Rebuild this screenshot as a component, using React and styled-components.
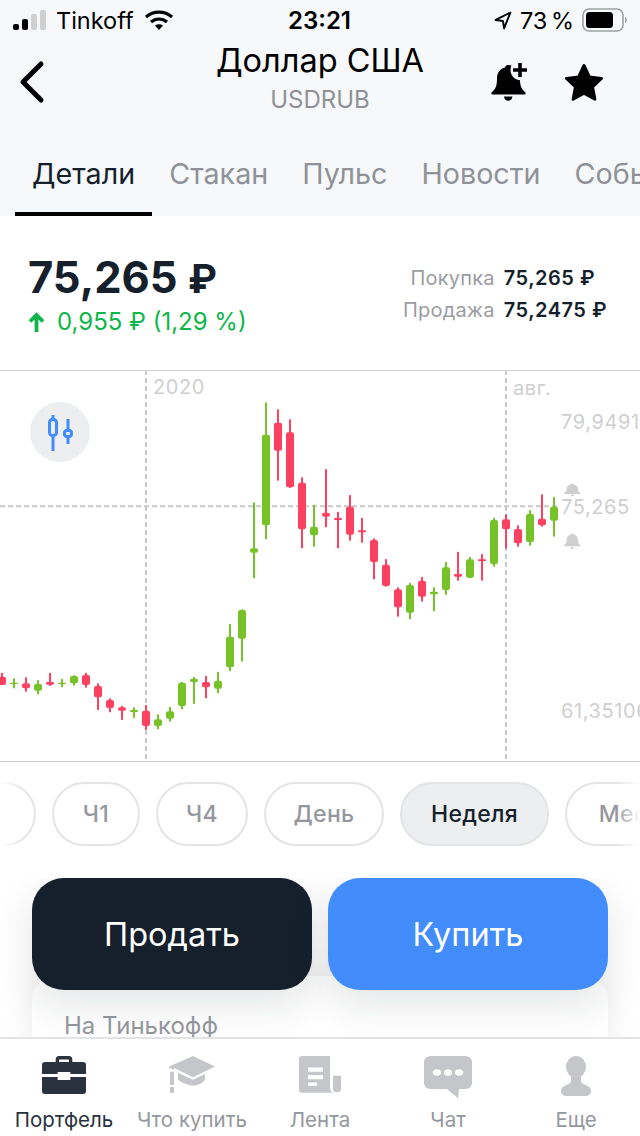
import styled, { createGlobalStyle } from "styled-components";

const GlobalStyle = createGlobalStyle`
  html, body {
    margin: 0;
    padding: 0;
    background: #fff;
    font-family: "Inter", "Noto Sans", sans-serif;
  }
  * { box-sizing: border-box; }
`;

const Page = styled.div`
  width: 640px;
  height: 1136px;
  display: flex;
  flex-direction: column;
  overflow: hidden;
  background: #fff;
`;

const Header = styled.header`
  height: 216px;
  flex: none;
  background: #f7f8fa;
  display: flex;
  flex-direction: column;
`;

const StatusBar = styled.div`
  height: 40px;
  padding: 0 13px 0 12px;
  display: grid;
  grid-template-columns: 1fr auto 1fr;
  align-items: center;
  color: #000;
  font-size: 23.5px;
`;

const StatusSide = styled.div`
  display: flex;
  align-items: center;
  justify-content: ${(p) => (p.$end ? "flex-end" : "flex-start")};
  gap: ${(p) => p.$gap || 10}px;
`;

const Clock = styled.div`
  font-weight: 600;
  font-size: 24px;
`;

const Percent = styled.span`
  word-spacing: -3px;
`;

const TitleRow = styled.div`
  height: 84px;
  padding: 0 36px 0 18px;
  display: grid;
  grid-template-columns: 138px 1fr 120px;
  align-items: center;
`;

const TitleBlock = styled.div`
  display: flex;
  flex-direction: column;
  align-items: center;
  margin-top: -9px;
`;

const Title = styled.div`
  font-size: 32.5px;
  line-height: 40px;
  color: #000;
  white-space: nowrap;
`;

const Ticker = styled.div`
  margin-top: 4px;
  font-size: 24px;
  line-height: 30px;
  color: #8e9298;
`;

const HeaderActions = styled.div`
  display: flex;
  justify-content: flex-end;
  align-items: center;
  gap: 36px;
`;

const Tabs = styled.nav`
  flex: 1;
  display: flex;
  align-items: stretch;
  padding-left: 15px;
  overflow: hidden;
`;

const Tab = styled.div`
  flex: none;
  padding: 10px 17px 0;
  display: flex;
  align-items: center;
  font-size: 28.7px;
  color: ${(p) => (p.$active ? "#161f2c" : "#8e9298")};
  border-bottom: 4px solid ${(p) => (p.$active ? "#000" : "transparent")};
`;

const PriceBlock = styled.section`
  height: 154px;
  flex: none;
  padding: 34px 33px 0 28px;
  display: flex;
  justify-content: space-between;
  align-items: flex-start;
`;

const PriceMain = styled.div`
  display: flex;
  flex-direction: column;
`;

const BigPrice = styled.div`
  font-size: 43.5px;
  line-height: 54px;
  font-weight: 700;
  color: #161f2c;
`;

const BigRuble = styled.span`
  font-size: 39px;
`;

const Change = styled.div`
  display: flex;
  align-items: center;
  gap: 12px;
  font-size: 24px;
  line-height: 32px;
  color: #0db64a;
`;

const Quotes = styled.div`
  display: grid;
  grid-template-columns: auto auto;
  column-gap: 9px;
  row-gap: 6px;
  margin-top: 15px;
  font-size: 20px;
  line-height: 26px;
`;

const QuoteLabel = styled.div`
  text-align: right;
  letter-spacing: 0.2px;
  color: #9a9da2;
`;

const QuoteValue = styled.div`
  font-weight: 600;
  letter-spacing: 0.5px;
  color: #161f2c;
`;

const Chart = styled.section`
  position: relative;
  height: 392px;
  flex: none;
  border-top: 1px solid #d0d0d0;
  border-bottom: 1px solid #d0d0d0;
  overflow: hidden;
`;

const ChartSvg = styled.svg`
  display: block;
  width: 640px;
  height: 390px;
  margin-top: -1px;
`;

const AxisLabel = styled.div`
  position: absolute;
  left: ${(p) => p.$x}px;
  top: ${(p) => p.$y}px;
  font-size: 20px;
  line-height: 24px;
  letter-spacing: 0.6px;
  color: #cfcfcf;
  white-space: nowrap;
`;

const IndicatorButton = styled.div`
  position: absolute;
  left: 30px;
  top: 31px;
  width: 60px;
  height: 60px;
  border-radius: 50%;
  background: #eceef0;
  display: flex;
  align-items: center;
  justify-content: center;
`;

const ChipStrip = styled.div`
  position: relative;
  height: 116px;
  flex: none;
  padding-top: 20px;
  overflow: hidden;
  &::before, &::after {
    content: "";
    position: absolute;
    top: 0;
    bottom: 0;
    width: 24px;
  }
  &::before {
    left: 0;
    background: linear-gradient(to right, #fff, rgba(255, 255, 255, 0));
  }
  &::after {
    right: 0;
    background: linear-gradient(to left, #fff, rgba(255, 255, 255, 0));
  }
`;

const Chips = styled.div`
  display: flex;
  gap: 16px;
  margin-left: -84px;
`;

const Chip = styled.div`
  flex: none;
  width: ${(p) => p.$w}px;
  height: 64px;
  border-radius: 32px;
  border: 2px solid #e3e4e6;
  display: flex;
  align-items: center;
  justify-content: center;
  font-size: 23px;
  font-weight: 500;
  letter-spacing: 0.3px;
  color: ${(p) => (p.$active ? "#161f2c" : "#94989e")};
  background: ${(p) => (p.$active ? "#eceef0" : "#fff")};
`;

const Trade = styled.section`
  position: relative;
  flex: 1;
  min-height: 0;
  overflow: hidden;
`;

const TradeButtons = styled.div`
  position: relative;
  z-index: 1;
  display: grid;
  grid-template-columns: 1fr 1fr;
  gap: 16px;
  padding: 0 32px;
`;

const TradeButton = styled.button`
  height: 112px;
  border: none;
  border-radius: 32px;
  font-family: inherit;
  font-size: 32.5px;
  color: #fff;
  background: ${(p) => p.$bg};
  box-shadow: 0 14px 40px rgba(22, 31, 44, 0.12);
`;

const InfoCard = styled.div`
  margin: -14px 32px 0;
  height: 90px;
  padding: 36px 32px 0;
  border-radius: 24px 24px 0 0;
  background: #fff;
  box-shadow: 0 0 32px rgba(22, 31, 44, 0.08);
  font-size: 24px;
  line-height: 28px;
  color: #94989e;
`;

const BottomNav = styled.nav`
  height: 99px;
  flex: none;
  display: grid;
  grid-template-columns: repeat(5, 1fr);
  background: #fff;
  border-top: 2px solid #e2e3e5;
`;

const NavItem = styled.div`
  display: flex;
  flex-direction: column;
  align-items: center;
  font-size: 20.5px;
  color: ${(p) => (p.$active ? "#2a3240" : "#94989e")};
  white-space: nowrap;
`;

const NavIcon = styled.div`
  height: 68px;
  padding-top: 17px;
  display: flex;
  align-items: flex-start;
  justify-content: center;
`;

const GREEN = "#76c228";
const RED = "#ff4060";

// x, wick top, wick bottom, body top, body bottom (3x chart units)
const candles = [
  [6, 908, 945, 920, 945, "r"], [42, 925, 955, 938, 942, "g"], [78, 922, 965, 940, 955, "r"],
  [114, 930, 973, 942, 962, "g"], [150, 908, 948, 936, 944, "r"], [186, 926, 952, 938, 942, "g"],
  [222, 915, 947, 918, 940, "g"], [258, 908, 953, 915, 945, "r"], [294, 940, 1020, 948, 982, "r"],
  [330, 985, 1027, 990, 1014, "r"], [366, 1007, 1050, 1012, 1022, "r"], [402, 1012, 1044, 1020, 1026, "g"],
  [438, 1005, 1080, 1022, 1068, "r"], [474, 1033, 1078, 1048, 1068, "g"], [510, 1010, 1055, 1024, 1046, "g"],
  [546, 935, 1018, 938, 1008, "g"], [582, 920, 1002, 926, 936, "g"], [618, 917, 985, 936, 952, "r"],
  [654, 905, 970, 932, 956, "g"], [690, 762, 904, 800, 892, "g"], [726, 718, 875, 720, 806, "g"],
  [762, 397, 625, 535, 548, "g"], [798, 97, 508, 194, 466, "g"], [834, 118, 332, 158, 242, "r"],
  [870, 148, 354, 187, 352, "r"], [906, 322, 535, 338, 478, "r"], [942, 404, 530, 470, 496, "g"],
  [978, 297, 472, 428, 440, "r"], [1014, 425, 535, 444, 450, "r"], [1050, 375, 512, 410, 494, "r"],
  [1086, 443, 518, 481, 487, "r"], [1122, 505, 628, 510, 576, "r"], [1158, 567, 650, 584, 648, "r"],
  [1194, 652, 740, 658, 712, "r"], [1230, 638, 748, 645, 728, "g"], [1266, 620, 695, 632, 680, "r"],
  [1302, 652, 724, 665, 673, "g"], [1338, 575, 675, 592, 660, "g"], [1374, 545, 632, 612, 620, "r"],
  [1410, 560, 625, 568, 623, "g"], [1446, 552, 632, 568, 573, "r"], [1482, 443, 590, 450, 582, "g"],
  [1518, 433, 536, 448, 478, "r"], [1554, 466, 530, 477, 520, "r"], [1590, 420, 527, 432, 516, "g"],
  [1626, 373, 470, 446, 466, "r"], [1662, 380, 500, 410, 452, "g"],
];

const BellPath =
  "M12 1.5c-1 0-1.7.7-1.8 1.7C6.9 4 5 6.8 5 10.2c0 4.4-1 6.4-3.2 8.2-.6.5-.3 1.6.6 1.6h19.2c.9 0 1.2-1.1.6-1.6C20 16.6 19 14.6 19 10.2c0-3.4-1.9-6.2-5.2-7C13.7 2.2 13 1.5 12 1.5zM9.5 21.2a2.5 2.5 0 0 0 5 0z";

function CandleChart() {
  return (
    <ChartSvg viewBox="0 0 1920 1170">
      <g stroke="#c9c9c9" strokeWidth="6" strokeDasharray="15 9">
        <line x1="438" y1="0" x2="438" y2="1170" />
        <line x1="1518" y1="0" x2="1518" y2="1170" />
        <line x1="0" y1="409" x2="1680" y2="409" />
      </g>
      {candles.map(([x, wt, wb, bt, bb, kind]) => {
        const color = kind === "g" ? GREEN : RED;
        return (
          <g key={x} fill={color}>
            <rect x={x - 3} y={wt} width="6" height={wb - wt} rx="2" />
            <rect x={x - 12} y={bt} width="24" height={bb - bt} rx={Math.min(6, (bb - bt) / 2)} />
          </g>
        );
      })}
      <path transform="translate(1688 338) scale(2.4 1.7)" fill="#cfcfcf" d={BellPath} />
      <path transform="translate(1688 487) scale(2.4 2.1)" fill="#cfcfcf" d={BellPath} />
    </ChartSvg>
  );
}

function App() {
  return (
    <Page>
      <GlobalStyle />
      <Header>
        <StatusBar>
          <StatusSide>
            <svg width="34" height="20" viewBox="0 0 34 20">
              <rect x="1" y="14" width="6" height="6" rx="2" fill="#000" />
              <rect x="10" y="9" width="6" height="11" rx="2" fill="#000" />
              <rect x="19" y="4" width="6" height="16" rx="2" fill="#cfcfcf" />
              <rect x="28" y="0" width="6" height="20" rx="2" fill="#cfcfcf" />
            </svg>
            <span>Tinkoff</span>
            <svg width="30" height="22" viewBox="0 0 30 22" fill="none" stroke="#000" strokeWidth="3.2">
              <path d="M2 8c7.5-6.5 18.5-6.5 26 0" />
              <path d="M7 13c4.8-4 11.2-4 16 0" />
              <path d="M15 21l-4-4.5c2.4-1.6 5.6-1.6 8 0z" fill="#000" stroke="none" />
            </svg>
          </StatusSide>
          <Clock>23:21</Clock>
          <StatusSide $end $gap={8}>
            <svg width="18" height="19" viewBox="0 0 17 18" fill="none" stroke="#000" strokeWidth="1.8" strokeLinejoin="round">
              <path d="M15.5 1.5L1.5 8.5l7 1 1 7z" />
            </svg>
            <Percent>73 %</Percent>
            <svg width="45" height="24" viewBox="0 0 45 24">
              <rect x="1" y="1" width="40" height="22" rx="6" fill="none" stroke="#a0a0a0" strokeWidth="1.6" />
              <rect x="4" y="4" width="27" height="16" rx="3.5" fill="#000" />
              <path d="M43 9c1.200.4 1.800 1.600 1.800 3s-.6 2.600-1.800 3z" fill="#a0a0a0" />
            </svg>
          </StatusSide>
        </StatusBar>
        <TitleRow>
          <svg width="28" height="44" viewBox="0 0 28 44" fill="none" stroke="#000" strokeWidth="5" strokeLinecap="round" strokeLinejoin="round">
            <path d="M23 4L5 22l18 18" />
          </svg>
          <TitleBlock>
            <Title>Доллар США</Title>
            <Ticker>USDRUB</Ticker>
          </TitleBlock>
          <HeaderActions>
            <svg width="38" height="42" viewBox="0 0 38 42">
              <path
                fill="#000"
                d="M18 4c-1.6 0-2.7 1-2.9 2.6C9.8 7.9 7 12.2 7 17.4c0 7.6-1.6 10.8-5 13.6-1.1.9-.5 2.6 1 2.6h31c1.5 0 2.1-1.7 1-2.6-3.2-2.6-4.8-5.5-5-11.8-5.4-.5-9.5-4.8-9.5-10.2 0-1.6.3-3.1 1-4.4C20.300 4.200 19.200 4 18 4zM14 35.600a4.200 4.200 0 0 0 8.400 0z"
              />
              <path d="M30 2v14M23 9h14" stroke="#000" strokeWidth="3.6" />
            </svg>
            <svg width="40" height="38" viewBox="0 0 40 38">
              <path
                fill="#000"
                stroke="#000"
                strokeWidth="3"
                strokeLinejoin="round"
                d="M20 2.500l5.300 11.400 12.200 1.500-9 8.500 2.400 12.300L20 30.200l-10.900 6 2.400-12.300-9-8.500 12.200-1.500z"
              />
            </svg>
          </HeaderActions>
        </TitleRow>
        <Tabs>
          <Tab $active>Детали</Tab>
          <Tab>Стакан</Tab>
          <Tab>Пульс</Tab>
          <Tab>Новости</Tab>
          <Tab>События</Tab>
        </Tabs>
      </Header>

      <PriceBlock>
        <PriceMain>
          <BigPrice>75,265 <BigRuble>₽</BigRuble></BigPrice>
          <Change>
            <svg width="17" height="20" viewBox="0 0 16 20" fill="none" stroke="#0db64a" strokeWidth="3.8">
              <path d="M8 20V3M1.500 9.500L8 3l6.500 6.500" />
            </svg>
            <span>0,955 ₽ (1,29 %)</span>
          </Change>
        </PriceMain>
        <Quotes>
          <QuoteLabel>Покупка</QuoteLabel>
          <QuoteValue>75,265 ₽</QuoteValue>
          <QuoteLabel>Продажа</QuoteLabel>
          <QuoteValue>75,2475 ₽</QuoteValue>
        </Quotes>
      </PriceBlock>

      <Chart>
        <CandleChart />
        <AxisLabel $x={153} $y={4}>2020</AxisLabel>
        <AxisLabel $x={513} $y={5}>авг.</AxisLabel>
        <AxisLabel $x={561} $y={39}>79,9491</AxisLabel>
        <AxisLabel $x={561} $y={124}>75,265</AxisLabel>
        <AxisLabel $x={561} $y={328}>61,35106</AxisLabel>
        <IndicatorButton>
          <svg width="30" height="38" viewBox="0 0 30 38" fill="none" stroke="#438cfb" strokeWidth="3">
            <rect x="4.500" y="6.500" width="7" height="16" rx="3" />
            <path d="M8 2v4.500M8 22.500V38" />
            <rect x="19.500" y="17.500" width="7" height="6" rx="2.500" />
            <path d="M23 6v11.500M23 23.500V31" />
          </svg>
        </IndicatorButton>
      </Chart>

      <ChipStrip>
        <Chips>
          <Chip $w={120}>М30</Chip>
          <Chip $w={88}>Ч1</Chip>
          <Chip $w={92}>Ч4</Chip>
          <Chip $w={120}>День</Chip>
          <Chip $w={149} $active>Неделя</Chip>
          <Chip $w={144}>Месяц</Chip>
        </Chips>
      </ChipStrip>

      <Trade>
        <TradeButtons>
          <TradeButton $bg="#161f2c">Продать</TradeButton>
          <TradeButton $bg="#438cfb">Купить</TradeButton>
        </TradeButtons>
        <InfoCard>На Тинькофф</InfoCard>
      </Trade>

      <BottomNav>
        <NavItem $active>
          <NavIcon>
            <svg width="44" height="38" viewBox="0 0 45 38" preserveAspectRatio="none">
              <path
                fill="#2a3240"
                d="M14 6V3.500A3.500 3.500 0 0 1 17.500 0h10A3.500 3.500 0 0 1 31 3.500V6h-3.500V3.500h-10V6z"
              />
              <path fill="#2a3240" d="M3 6h39a3 3 0 0 1 3 3v9H29v-2h-13v2H0V9a3 3 0 0 1 3-3z" />
              <path fill="#2a3240" d="M0 21h16v3h13v-3h16v14a3 3 0 0 1-3 3H3a3 3 0 0 1-3-3z" />
            </svg>
          </NavIcon>
          <span>Портфель</span>
        </NavItem>
        <NavItem>
          <NavIcon>
            <svg width="46" height="37" viewBox="0 0 46 42" preserveAspectRatio="none" fill="#c5c6c9">
              <path d="M24 0l22 12-22 12L5 13.500V16L0 13v-1z" />
              <path d="M9 19l15 8 12-6.500V27c-3 5-8 6.500-12 6.500S13 31 9 27z" />
              <rect x="1" y="18" width="4" height="15" rx="1" />
              <rect x="1" y="35" width="4" height="7" rx="1" />
            </svg>
          </NavIcon>
          <span>Что купить</span>
        </NavItem>
        <NavItem>
          <NavIcon>
            <svg width="42" height="38" viewBox="0 0 42 46" preserveAspectRatio="none">
              <path
                fill="#c5c6c9"
                fillRule="evenodd"
                d="M3 0h28v38c0 3 1 5 3 6.500H3a3 3 0 0 1-3-3V3a3 3 0 0 1 3-3zm6 14v5h15v-5zm0 9v5h15v-5zm0 9v4h9v-4z"
              />
              <path fill="#c5c6c9" d="M34 24h8v16a4 4 0 0 1-8 0z" />
            </svg>
          </NavIcon>
          <span>Лента</span>
        </NavItem>
        <NavItem>
          <NavIcon>
            <svg width="48" height="43" viewBox="0 0 48 52" preserveAspectRatio="none">
              <path
                fill="#c5c6c9"
                d="M7 0h34a7 7 0 0 1 7 7v26a7 7 0 0 1-7 7h-6l-1 11-11-11H7a7 7 0 0 1-7-7V7a7 7 0 0 1 7-7z"
              />
              <circle cx="13" cy="20" r="4" fill="#fff" />
              <circle cx="24" cy="20" r="4" fill="#fff" />
              <circle cx="35" cy="20" r="4" fill="#fff" />
            </svg>
          </NavIcon>
          <span>Чат</span>
        </NavItem>
        <NavItem>
          <NavIcon>
            <svg width="30" height="40" viewBox="0 0 30 48" preserveAspectRatio="none" fill="#c5c6c9">
              <ellipse cx="15" cy="13" rx="10" ry="13" />
              <path d="M10 24h10v6c0 2 2 3.500 5 5 3 1.500 5 3.500 5 7 0 3-2 6-5 6H5c-3 0-5-3-5-6 0-3.500 2-5.500 5-7 3-1.500 5-3 5-5z" />
            </svg>
          </NavIcon>
          <span>Еще</span>
        </NavItem>
      </BottomNav>
    </Page>
  );
}

export default App;
